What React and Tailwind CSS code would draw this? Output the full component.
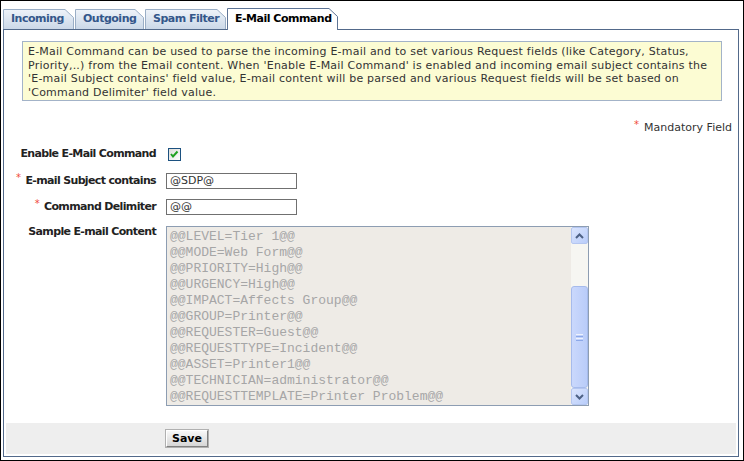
import React from "react";

const infoLines = [
  "E-Mail Command can be used to parse the incoming E-mail and to set various Request fields (like Category, Status,",
  "Priority,..) from the Email content. When 'Enable E-Mail Command' is enabled and incoming email subject contains the",
  "'E-mail Subject contains' field value, E-mail content will be parsed and various Request fields will be set based on",
  "'Command Delimiter' field value.",
];

const sampleLines = [
  "@@LEVEL=Tier 1@@",
  "@@MODE=Web Form@@",
  "@@PRIORITY=High@@",
  "@@URGENCY=High@@",
  "@@IMPACT=Affects Group@@",
  "@@GROUP=Printer@@",
  "@@REQUESTER=Guest@@",
  "@@REQUESTTYPE=Incident@@",
  "@@ASSET=Printer1@@",
  "@@TECHNICIAN=administrator@@",
  "@@REQUESTTEMPLATE=Printer Problem@@",
];

function Tab({ label, w, active, id }) {
  const h = active ? 22 : 20;
  return (
    <div
      className={
        "relative flex items-center pl-[8px] text-[11px] font-bold tracking-[-0.5px] " +
        (active ? "h-[22px] text-black" : "h-[20px] mb-px text-[#34578a]")
      }
      style={{ width: w }}
    >
      <svg className="absolute inset-0" width={w} height={h}>
        <defs>
          <linearGradient id={id} x1="0" y1="0" x2="0" y2="1">
            <stop offset="0" stopColor="#eef3f9" />
            <stop offset="1" stopColor="#cbd8e8" />
          </linearGradient>
        </defs>
        <path
          d={`M0.5 ${h} V0.5 H${w - 9} L${w - 0.5} 8.5 V${h}`}
          fill={active ? "#ffffff" : `url(#${id})`}
          stroke={active ? "#5d7496" : "#9aaec6"}
        />
      </svg>
      <span className="relative">{label}</span>
    </div>
  );
}

function Star() {
  return <span className="text-[#f04a3a] text-[10px] font-normal relative -top-[3px] mr-[5px]">*</span>;
}

function Checkbox() {
  return (
    <svg width="13" height="13">
      <defs>
        <linearGradient id="cb" x1="0" y1="0" x2="1" y2="1">
          <stop offset="0" stopColor="#dcdcd7" />
          <stop offset="1" stopColor="#ffffff" />
        </linearGradient>
      </defs>
      <rect x="0.5" y="0.5" width="12" height="12" fill="url(#cb)" stroke="#1c5180" />
      <polyline points="3,6 5,8.5 9.5,3.5" fill="none" stroke="#21a121" strokeWidth="2" />
    </svg>
  );
}

function ScrollButton({ up }) {
  return (
    <div className="h-[17px] w-[17px] rounded-[2px] border border-[#b4c6f0] bg-gradient-to-br from-[#dbe5fd] to-[#b9cdfa] flex items-center justify-center">
      <svg width="9" height="6">
        <polyline
          points={up ? "1,5 4.5,1.5 8,5" : "1,1 4.5,4.5 8,1"}
          fill="none"
          stroke="#4d6185"
          strokeWidth="2"
        />
      </svg>
    </div>
  );
}

function Scrollbar() {
  return (
    <div className="w-[17px] h-full flex flex-col bg-[#f6f6f2]">
      <ScrollButton up />
      <div className="flex-1 flex flex-col justify-end">
        <div className="h-[102px] rounded-[3px] border border-[#a6bbec] bg-gradient-to-r from-[#cad8fc] to-[#b9ccf9] flex flex-col items-center justify-center gap-[1px]">
          <div className="w-[7px] h-px bg-[#eef2fd]" />
          <div className="w-[7px] h-px bg-[#8ca8e8]" />
          <div className="w-[7px] h-px bg-[#eef2fd]" />
          <div className="w-[7px] h-px bg-[#8ca8e8]" />
        </div>
      </div>
      <ScrollButton />
    </div>
  );
}

export default function App() {
  return (
    <div className="w-[744px] h-[461px] border border-black bg-white font-['DejaVu_Sans',sans-serif] text-[#222] flex flex-col">
      <div className="relative z-10 -mb-px mt-[7px] ml-[2px] flex items-end gap-px">
        <Tab id="t1" label="Incoming" w={71} />
        <Tab id="t2" label="Outgoing" w={69} />
        <Tab id="t3" label="Spam Filter" w={81} />
        <Tab id="t4" label="E-Mail Command" w={111} active />
      </div>
      <div className="ml-[2px] mr-[4px] mb-[3px] flex-1 border border-[#52698a] flex flex-col">
        <div className="mt-[11px] ml-[18px] mr-[16px] h-[60px] border border-[#a3b3c8] bg-[#fcfcd3] pl-[5px] pt-[3px] text-[11px] leading-[13.5px] tracking-[0.22px] text-[#333] whitespace-nowrap overflow-hidden">
          {infoLines.map((l) => (
            <div key={l}>{l}</div>
          ))}
        </div>

        <div className="mt-[20px] pr-[6px] text-right text-[11px] leading-[14px] text-[#333]">
          <Star />
          Mandatory Field
        </div>

        <div className="mt-[9px] h-[20px] flex items-center">
          <div className="w-[152px] text-right text-[11px] font-bold tracking-[-0.65px]">Enable E-Mail Command</div>
          <div className="ml-[12px]">
            <Checkbox />
          </div>
        </div>

        <div className="mt-[8px] h-[18px] flex items-center">
          <div className="w-[152px] text-right text-[11px] font-bold tracking-[-0.65px] whitespace-nowrap">
            <Star />
            E-mail Subject contains
          </div>
          <div className="ml-[10px] w-[131px] h-[16px] border border-[#707070] px-[3px] text-[11px] leading-[14px] text-[#333]">
            @SDP@
          </div>
        </div>

        <div className="mt-[8px] h-[18px] flex items-center">
          <div className="w-[152px] text-right text-[11px] font-bold tracking-[-0.65px]">
            <Star />
            Command Delimiter
          </div>
          <div className="ml-[10px] w-[131px] h-[16px] border border-[#707070] px-[3px] text-[11px] leading-[14px] text-[#333]">
            @@
          </div>
        </div>

        <div className="mt-[10px] flex items-start">
          <div className="w-[152px] text-right text-[11px] font-bold tracking-[-0.65px] leading-[12px]">Sample E-mail Content</div>
          <div className="ml-[10px] w-[423px] h-[180px] border border-[#8d9db2] bg-[#eeebe6] flex">
            <div className="flex-1 overflow-hidden pl-[3px] pt-[2px] font-['Liberation_Mono',monospace] text-[13px] leading-[16px] text-[#a6a6a6] whitespace-pre">
              {sampleLines.map((l) => (
                <div key={l}>{l}</div>
              ))}
            </div>
            <Scrollbar />
          </div>
        </div>

        <div className="mt-[17px] mx-[2px] h-[31px] bg-[#eeeeee] flex items-center">
          <button className="ml-[160px] h-[17px] w-[42px] border border-t-[#ffffff] border-l-[#ffffff] border-r-[#808080] border-b-[#808080] bg-gradient-to-b from-[#f8f8f8] to-[#d6d6d6] text-[11px] font-bold text-black leading-[14px] outline outline-1 outline-[#b0b0b0]">
            Save
          </button>
        </div>
      </div>
    </div>
  );
}
